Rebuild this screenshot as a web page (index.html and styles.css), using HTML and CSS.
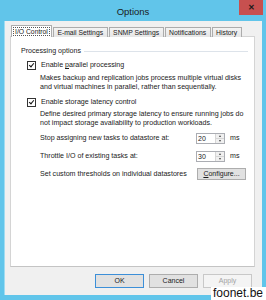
FILE: index.html
```html
<!DOCTYPE html>
<html lang="en">
<head>
    <meta charset="UTF-8">
    <title>Options</title>
    <link rel="stylesheet" href="styles.css">
</head>
<body>
    <div class="window">
        <div class="titlebar">
            <span></span>
            <span class="title">Options</span>
            <span class="close">&#x2715;</span>
        </div>

        <div class="client">
            <div class="tabs">
                <div class="tab selected"><span class="focus">I/O Control</span></div>
                <div class="tab">E-mail Settings</div>
                <div class="tab">SNMP Settings</div>
                <div class="tab">Notifications</div>
                <div class="tab">History</div>
            </div>

            <div class="panel">
                <div class="group-head">
                    <span>Processing options</span>
                    <span class="group-line"></span>
                </div>

                <div class="check-row first">
                    <span class="box checked"></span>
                    <span>Enable <u>p</u>arallel processing</span>
                </div>
                <p class="desc">Makes backup and replication jobs process multiple virtual disks<br>and virtual machines in parallel, rather than sequentially.</p>

                <div class="check-row">
                    <span class="box checked"></span>
                    <span>Enable storage latency control</span>
                </div>
                <p class="desc">Define desired primary storage latency to ensure running jobs do<br>not impact storage availability to production workloads.</p>

                <div class="field-row first">
                    <span class="field-label">Stop assigning new tasks to datastore at:</span>
                    <span class="spin"><span class="spin-val">20</span><span class="arrows"><span class="arr up"></span><span class="arr down"></span></span></span>
                    <span class="unit">ms</span>
                </div>
                <div class="field-row">
                    <span class="field-label">Throttle I/O of existing tasks at:</span>
                    <span class="spin"><span class="spin-val">30</span><span class="arrows"><span class="arr up"></span><span class="arr down"></span></span></span>
                    <span class="unit">ms</span>
                </div>
                <div class="field-row">
                    <span class="field-label">Set custom thresholds on individual datastores</span>
                    <span class="btn small"><u>C</u>onfigure...</span>
                </div>
            </div>

            <div class="buttons">
                <span class="btn default">OK</span>
                <span class="btn">Cancel</span>
                <span class="btn disabled">Apply</span>
            </div>
        </div>

        <div class="watermark">foonet.be</div>
    </div>
</body>
</html>
```

FILE: styles.css
```css
body { margin: 0; font-family: "Liberation Sans", Arial, sans-serif; color: #1a1a1a; }

.window {
    position: relative;
    width: 266px;
    height: 300px;
    box-sizing: border-box;
    padding: 0 4px 5px 4px;
    background-color: #61c5ea;
    display: flex;
    flex-direction: column;
}

.titlebar {
    height: 21px;
    display: grid;
    grid-template-columns: 1fr auto 1fr;
    align-items: start;
}
.title { font-size: 9.5px; line-height: 10px; margin-top: 7px; color: #1b1b1b; }
.close {
    justify-self: end;
    margin-right: -1px;
    width: 24px;
    height: 15px;
    background-color: #c7504f;
    color: #1a1a1a;
    font-size: 8px;
    font-weight: bold;
    line-height: 15px;
    text-align: center;
}

.client {
    flex: 1;
    background-color: #f0f0f0;
    padding: 4px 7px 0 6px;
    box-shadow: inset 1px 0 0 #9fdcf2;
}

/* tab strip */
.tabs { display: flex; align-items: flex-end; height: 12px; margin-bottom: -1px; position: relative; z-index: 1; }
.tab {
    height: 9px;
    line-height: 9px;
    font-size: 6.8px;
    padding: 0 3.5px;
    margin-left: 1px;
    border: 1px solid #acacac;
    border-bottom: none;
    background: linear-gradient(#f3f3f3, #e6e6e6);
    white-space: nowrap;
}
.tab.selected {
    height: 11px;
    line-height: 11px;
    margin-left: 1px;
    padding: 0 1px;
    background: #fff;
}
.focus { outline: 1px dotted #555; outline-offset: -1px; padding: 0 2px; display: inline-block; line-height: 9px; }

.panel {
    box-sizing: border-box;
    height: 231px;
    background-color: #fff;
    border: 1px solid #d4d4d4;
    border-bottom-color: #c4c4c4;
    padding: 10px 6px 0 10px;
    font-size: 7.1px;
    line-height: 9px;
}

.group-head { display: flex; align-items: center; gap: 3px; }
.group-line { flex: 1; height: 1px; background-color: #dde3ea; }

.check-row { display: flex; align-items: center; gap: 5px; margin: 6px 0 0 6px; }
.check-row.first { margin-top: 5px; }
.box {
    width: 7px;
    height: 7px;
    border: 1px solid #333;
    background: #fff;
    position: relative;
}
.box.checked::after {
    content: "";
    position: absolute;
    left: 2px;
    top: 0px;
    width: 2px;
    height: 4px;
    border: solid #111;
    border-width: 0 1.4px 1.4px 0;
    transform: rotate(40deg);
}

.desc { margin: 3.5px 0 0 19px; }

.field-row { display: flex; align-items: center; height: 11px; margin: 7px 0 0 19px; }
.field-row.first { margin-top: 4.5px; }
.field-label { width: 156px; }
.spin {
    display: flex;
    width: 27px;
    height: 9px;
    border: 1px solid #abadb3;
    background: #fff;
}
.spin-val { flex: 1; padding-left: 1px; line-height: 9px; font-size: 7px; }
.arrows { display: flex; flex-direction: column; width: 9px; }
.arr { flex: 1; background: #f0f0f0; border-left: 1px solid #d6d6d6; position: relative; }
.arr.up { border-bottom: 1px solid #d6d6d6; }
.arr::after {
    content: "";
    position: absolute;
    left: 3px;
    border-left: 1.5px solid transparent;
    border-right: 1.5px solid transparent;
}
.arr.up::after { top: 1px; border-bottom: 2px solid #444; }
.arr.down::after { top: 1px; border-top: 2px solid #444; }
.unit { margin-left: 5px; }

.btn {
    display: inline-block;
    box-sizing: border-box;
    width: 49px;
    height: 14px;
    line-height: 12px;
    text-align: center;
    font-size: 7px;
    background-color: #e1e1e1;
    border: 1px solid #adadad;
}
.btn.small { margin-left: 1px; height: 12px; line-height: 10px; }
.btn.default { border-color: #3c8fd8; }
.btn.disabled { background-color: #f4f4f4; border-color: #c8c8c8; color: #a3a3a3; }

.buttons { display: flex; justify-content: flex-end; gap: 5px; margin: 7px 3px 0 0; }

.watermark {
    position: absolute;
    right: 0;
    bottom: 0;
    padding: 0 3px 0 2px;
    background-color: #fff;
    font-size: 12px;
    line-height: 13px;
    color: #111;
}
```
